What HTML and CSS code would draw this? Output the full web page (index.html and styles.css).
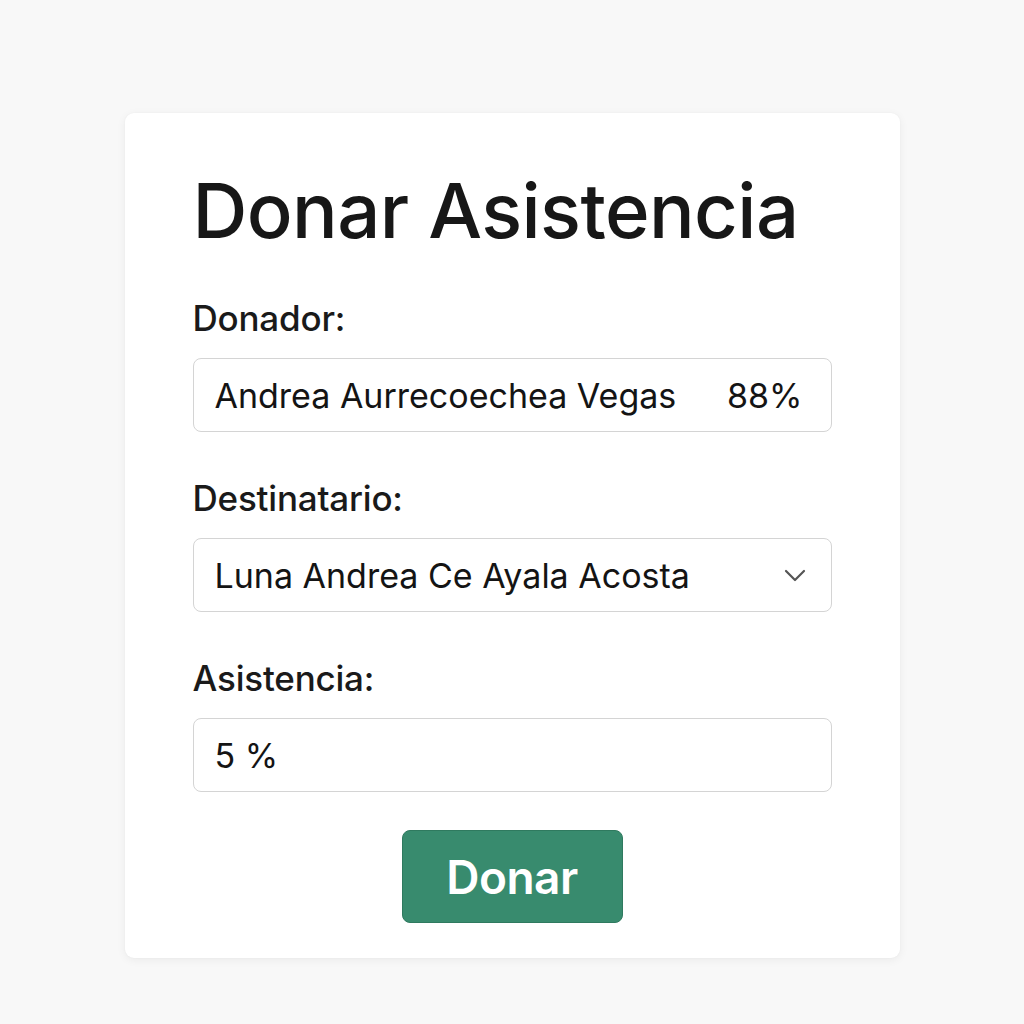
FILE: index.html
```html
<!DOCTYPE html>
<html lang="es">
<head>
<meta charset="utf-8">
<title>Donar Asistencia</title>
<link rel="stylesheet" href="styles.css">
</head>
<body>
<main class="page">
  <section class="card">
    <h1 class="title">Donar Asistencia</h1>
    <div class="fields">
      <div class="field">
        <label class="label">Donador:</label>
        <div class="input">
          <span>Andrea Aurrecoechea Vegas</span>
          <span>88%</span>
        </div>
      </div>
      <div class="field">
        <label class="label">Destinatario:</label>
        <div class="input select">
          <span>Luna Andrea Ce Ayala Acosta</span>
          <svg class="chevron" width="22" height="13" viewBox="0 0 22 13" aria-hidden="true">
            <path d="M2 2 L11 11 L20 2" fill="none" stroke="#555" stroke-width="2.2" stroke-linecap="round" stroke-linejoin="round"/>
          </svg>
        </div>
      </div>
      <div class="field">
        <label class="label">Asistencia:</label>
        <div class="input">
          <span>5 %</span>
        </div>
      </div>
    </div>
    <div class="actions">
      <button class="btn" type="button">Donar</button>
    </div>
  </section>
</main>
</body>
</html>
```

FILE: styles.css
```css
* { box-sizing: border-box; }
html, body {
  margin: 0;
  padding: 0;
  background: #f8f8f8;
  font-family: "Inter", "Liberation Sans", sans-serif;
  color: #1a1a1a;
}
.page {
  display: flex;
  justify-content: center;
  padding-top: 113px;
  min-height: 1024px;
}
.card {
  width: 775px;
  height: 845px;
  background: #ffffff;
  border-radius: 9px;
  box-shadow: 0 2px 10px rgba(0, 0, 0, 0.06), 0 0 2px rgba(0, 0, 0, 0.04);
  padding: 59px 68px 35px 68px;
  display: flex;
  flex-direction: column;
}
.title {
  margin: 0;
  font-size: 76px;
  line-height: 76px;
  font-weight: 500;
  letter-spacing: -0.6px;
  color: #171717;
}
.fields {
  margin-top: 50px;
  display: flex;
  flex-direction: column;
  gap: 46px;
}
.field {
  display: flex;
  flex-direction: column;
  gap: 20px;
}
.label {
  font-size: 35px;
  line-height: 40px;
  font-weight: 500;
  letter-spacing: -0.2px;
  color: #1a1a1a;
}
.input {
  height: 74px;
  border: 1px solid #d4d4d4;
  border-radius: 8px;
  padding: 0 28px 0 21px;
  display: flex;
  align-items: center;
  justify-content: space-between;
  font-size: 34px;
  font-weight: 400;
  color: #141414;
}
.select {
  padding-right: 25px;
}
.chevron {
  display: block;
}
.actions {
  margin-top: 38px;
  display: flex;
  justify-content: center;
}
.btn {
  width: 221px;
  height: 93px;
  background: #388b6e;
  border: 1px solid #2f7a5f;
  border-radius: 8px;
  color: #ffffff;
  font-family: "Inter", "Liberation Sans", sans-serif;
  font-size: 46px;
  font-weight: 600;
  letter-spacing: -0.5px;
  cursor: pointer;
}
```
